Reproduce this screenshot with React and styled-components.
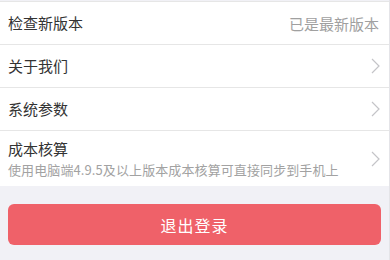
import React from "react";
import styled, { createGlobalStyle } from "styled-components";

const GlobalStyle = createGlobalStyle`
  html, body {
    margin: 0;
    padding: 0;
    background: #f1f1f6;
    font-family: "Noto Sans CJK SC", "Noto Sans", sans-serif;
  }
`;

const Page = styled.div`
  width: 390px;
  height: 260px;
  overflow: hidden;
  background: #f1f1f6;
  border-right: 1px solid #e4e4e8;
  box-sizing: border-box;
  padding-top: 1px;
`;

const List = styled.div`
  background: #fff;
  border-top: 1px solid #e6e6e6;
`;

const Row = styled.div`
  display: flex;
  align-items: center;
  height: ${p => (p.tall ? "55px" : "42px")};
  padding: 0 9px 0 8px;
  border-bottom: ${p => (p.last ? "none" : "1px solid #e6e6e6")};
`;

const Texts = styled.div`
  flex: 1;
  display: flex;
  flex-direction: column;
  justify-content: center;
  gap: 2px;
`;

const Title = styled.div`
  font-size: 15px;
  line-height: 20px;
  color: #333;
`;

const Sub = styled.div`
  font-size: 13px;
  line-height: 17px;
  color: #a2a2a2;
  letter-spacing: 0.1px;
  white-space: nowrap;
`;

const Value = styled.div`
  font-size: 15px;
  color: #a0a0a0;
  padding-right: 1px;
`;

const Chevron = () => (
  <svg width="9" height="16" viewBox="0 0 9 16" fill="none">
    <path d="M1 1l7 7-7 7" stroke="#c4c4c8" strokeWidth="1.2" />
  </svg>
);

const Footer = styled.div`
  padding: 18px 8px 0 8px;
`;

const LogoutButton = styled.button`
  width: 100%;
  height: 41px;
  border: 0;
  border-radius: 6px;
  background: #ef6169;
  color: #fff;
  font-family: inherit;
  font-size: 16px;
  letter-spacing: 1px;
`;

export default function App() {
  return (
    <>
      <GlobalStyle />
      <Page>
        <List>
          <Row>
            <Texts>
              <Title>检查新版本</Title>
            </Texts>
            <Value>已是最新版本</Value>
          </Row>
          <Row>
            <Texts>
              <Title>关于我们</Title>
            </Texts>
            <Chevron />
          </Row>
          <Row>
            <Texts>
              <Title>系统参数</Title>
            </Texts>
            <Chevron />
          </Row>
          <Row tall last>
            <Texts>
              <Title>成本核算</Title>
              <Sub>使用电脑端4.9.5及以上版本成本核算可直接同步到手机上</Sub>
            </Texts>
            <Chevron />
          </Row>
        </List>
        <Footer>
          <LogoutButton>退出登录</LogoutButton>
        </Footer>
      </Page>
    </>
  );
}
